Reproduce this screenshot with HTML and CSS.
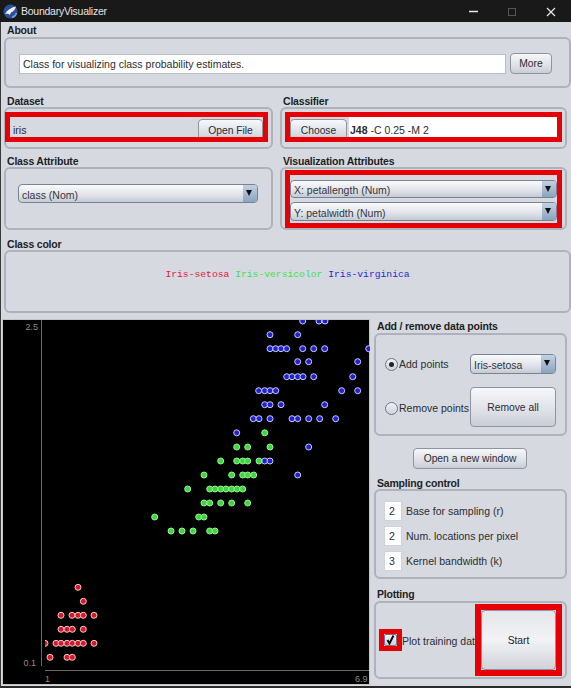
FILE: index.html
```html
<!DOCTYPE html>
<html lang="en">
<head>
    <meta charset="UTF-8">
    <meta name="viewport" content="width=device-width, initial-scale=1.0">
    <title>BoundaryVisualizer</title>
    <link rel="stylesheet" href="styles.css">
</head>
<body>
    <div class="window">
        <div class="titlebar">
            <svg class="app-icon" width="15" height="15" viewBox="0 0 15 15">
                <circle cx="7.500" cy="7.500" r="7" fill="#2b4f96"/>
                <path d="M2 10 C4 6 8 3.500 13 2.500 C12 6 10 8 8.500 8 L6.500 11 C6 9.500 4 9.500 2 10Z" fill="#eef2fa"/>
                <path d="M9 13.500 C11 13 13 11 13.500 9" fill="none" stroke="#7f9ed6" stroke-width="1.500"/>
            </svg>
            <span class="title-text">BoundaryVisualizer</span>
            <div class="win-controls">
                <svg width="102" height="22" viewBox="0 0 102 22">
                    <path d="M0 11.500H9" stroke="#e8e8e8" stroke-width="1.500"/>
                    <rect x="39.500" y="8.500" width="7" height="7" fill="none" stroke="#555"/>
                    <path d="M78 8L86 16M86 8L78 16" stroke="#e8e8e8" stroke-width="1.200"/>
                </svg>
            </div>
        </div>

        <div class="content">
            <div class="group about-group">
                <div class="group-label">About</div>
                <div class="group-box about-box">
                    <div class="text-field about-field">Class for visualizing class probability estimates.</div>
                    <button class="btn more-btn">More</button>
                </div>
            </div>

            <div class="two-col">
                <div class="group">
                    <div class="group-label">Dataset</div>
                    <div class="group-box dataset-box">
                        <div class="red-frame dataset-frame">
                            <span class="dataset-name">iris</span>
                            <button class="btn file-btn">Open File</button>
                        </div>
                    </div>
                </div>
                <div class="group">
                    <div class="group-label">Classifier</div>
                    <div class="group-box dataset-box">
                        <div class="red-frame classifier-frame">
                            <button class="btn choose-btn">Choose</button>
                            <div class="text-field classifier-field"><b>J48</b> -C 0.25 -M 2</div>
                        </div>
                    </div>
                </div>
            </div>

            <div class="two-col attr-row">
                <div class="group">
                    <div class="group-label">Class Attribute</div>
                    <div class="group-box attr-box">
                        <div class="combo class-combo"><span class="combo-text">class (Nom)</span><span class="combo-arrow"></span></div>
                    </div>
                </div>
                <div class="group">
                    <div class="group-label">Visualization Attributes</div>
                    <div class="group-box vis-box">
                        <div class="red-frame vis-frame">
                            <div class="combo"><span class="combo-text">X: petallength (Num)</span><span class="combo-arrow"></span></div>
                            <div class="combo combo-tall"><span class="combo-text">Y: petalwidth (Num)</span><span class="combo-arrow"></span></div>
                        </div>
                    </div>
                </div>
            </div>

            <div class="group color-group">
                <div class="group-label">Class color</div>
                <div class="group-box color-box">
                    <span class="c-red">Iris-setosa</span> <span class="c-green">Iris-versicolor</span> <span class="c-blue">Iris-virginica</span>
                </div>
            </div>
        </div>

        <div class="bottom">
            <svg class="plot" width="368" height="366" viewBox="2 320 368 366">
                <defs>
                    <clipPath id="plot-area"><rect x="45" y="321" width="325" height="349"/></clipPath>
                </defs>
                <rect x="2.500" y="320.500" width="367" height="365" fill="#000" stroke="#c4c4c4"/>
                <path d="M41.500 321V667M45 671.500H369" stroke="#6a6a6a" fill="none"/>
                <text class="axis-text" x="38" y="331" text-anchor="end">2.5</text>
                <text class="axis-text" x="36" y="667" text-anchor="end">0.1</text>
                <text class="axis-text" x="45" y="683">1</text>
                <text class="axis-text" x="355" y="683">6.9</text>
                <g clip-path="url(#plot-area)">
                    <g class="pt-blue">
                        <circle cx="302.700" cy="322" r="3"/><circle cx="319" cy="322" r="3"/><circle cx="325" cy="322" r="3"/>
                        <circle cx="270" cy="335.700" r="3"/><circle cx="297.700" cy="335.700" r="3"/>
                        <circle cx="270" cy="349.700" r="3"/><circle cx="275.700" cy="349.700" r="3"/><circle cx="281" cy="349.700" r="3"/><circle cx="286.700" cy="349.700" r="3"/><circle cx="302.700" cy="349.700" r="3"/><circle cx="313.700" cy="349.700" r="3"/><circle cx="324.700" cy="349.700" r="3"/><circle cx="368.700" cy="349.700" r="3"/>
                        <circle cx="297.700" cy="362.700" r="3"/><circle cx="308.700" cy="362.700" r="3"/><circle cx="357.700" cy="362.700" r="3"/>
                        <circle cx="286.700" cy="377.700" r="3"/><circle cx="292" cy="377.700" r="3"/><circle cx="297.700" cy="377.700" r="3"/><circle cx="303" cy="377.700" r="3"/><circle cx="313.700" cy="377.700" r="3"/><circle cx="352.700" cy="377.700" r="3"/>
                        <circle cx="258.700" cy="391.700" r="3"/><circle cx="264.700" cy="391.700" r="3"/><circle cx="270" cy="391.700" r="3"/><circle cx="275.700" cy="391.700" r="3"/><circle cx="341.700" cy="391.700" r="3"/><circle cx="357.700" cy="391.700" r="3"/>
                        <circle cx="264.700" cy="405.700" r="3"/><circle cx="270" cy="405.700" r="3"/><circle cx="281" cy="405.700" r="3"/><circle cx="324.700" cy="405.700" r="3"/>
                        <circle cx="253.300" cy="419.700" r="3"/><circle cx="259" cy="419.700" r="3"/><circle cx="270" cy="419.700" r="3"/><circle cx="292" cy="419.700" r="3"/><circle cx="297.700" cy="419.700" r="3"/><circle cx="308.700" cy="419.700" r="3"/><circle cx="319.700" cy="419.700" r="3"/><circle cx="335.700" cy="419.700" r="3"/>
                        <circle cx="236.700" cy="433.800" r="3"/>
                        <circle cx="308.700" cy="448" r="3"/>
                        <circle cx="264.700" cy="462" r="3"/><circle cx="270" cy="462" r="3"/>
                        <circle cx="297.700" cy="476" r="3"/>
                    </g>
                    <g class="pt-green">
                        <circle cx="264.700" cy="433.800" r="3"/>
                        <circle cx="236.700" cy="448" r="3"/><circle cx="247.700" cy="448" r="3"/><circle cx="270" cy="448" r="3"/>
                        <circle cx="220.700" cy="462" r="3"/><circle cx="236.700" cy="462" r="3"/><circle cx="242.700" cy="462" r="3"/><circle cx="247.700" cy="462" r="3"/><circle cx="259" cy="462" r="3"/>
                        <circle cx="204" cy="476" r="3"/><circle cx="231.700" cy="476" r="3"/><circle cx="242.700" cy="476" r="3"/><circle cx="247.700" cy="476" r="3"/><circle cx="253.700" cy="476" r="3"/>
                        <circle cx="187.700" cy="490" r="3"/><circle cx="209.700" cy="490" r="3"/><circle cx="215" cy="490" r="3"/><circle cx="220.700" cy="490" r="3"/><circle cx="226" cy="490" r="3"/><circle cx="231.700" cy="490" r="3"/><circle cx="237" cy="490" r="3"/><circle cx="242.700" cy="490" r="3"/>
                        <circle cx="204" cy="504" r="3"/><circle cx="209.700" cy="504" r="3"/><circle cx="220.700" cy="504" r="3"/><circle cx="231.700" cy="504" r="3"/><circle cx="247.700" cy="504" r="3"/>
                        <circle cx="154.700" cy="518" r="3"/><circle cx="198.700" cy="518" r="3"/><circle cx="204" cy="518" r="3"/>
                        <circle cx="171" cy="532" r="3"/><circle cx="182" cy="532" r="3"/><circle cx="193" cy="532" r="3"/><circle cx="209.700" cy="532" r="3"/><circle cx="215" cy="532" r="3"/>
                    </g>
                    <g class="pt-red">
                        <circle cx="78" cy="588.300" r="3"/>
                        <circle cx="83.300" cy="602.300" r="3"/>
                        <circle cx="61" cy="616.300" r="3"/><circle cx="72" cy="616.300" r="3"/><circle cx="78" cy="616.300" r="3"/><circle cx="83.300" cy="616.300" r="3"/><circle cx="94" cy="616.300" r="3"/>
                        <circle cx="61" cy="630.300" r="3"/><circle cx="67" cy="630.300" r="3"/><circle cx="72.300" cy="630.300" r="3"/><circle cx="83.300" cy="630.300" r="3"/>
                        <circle cx="45" cy="644.300" r="3"/><circle cx="56" cy="644.300" r="3"/><circle cx="61" cy="644.300" r="3"/><circle cx="67" cy="644.300" r="3"/><circle cx="72.300" cy="644.300" r="3"/><circle cx="78" cy="644.300" r="3"/><circle cx="83.300" cy="644.300" r="3"/><circle cx="94" cy="644.300" r="3"/>
                        <circle cx="50" cy="658.300" r="3"/><circle cx="67" cy="658.300" r="3"/><circle cx="72.300" cy="658.300" r="3"/>
                    </g>
                </g>
            </svg>

            <div class="side">
                <div class="group">
                    <div class="group-label side-label">Add / remove data points</div>
                    <div class="group-box points-box">
                        <div class="radio-col">
                            <label class="radio-row"><span class="radio radio-on"></span>Add points</label>
                            <label class="radio-row"><span class="radio"></span>Remove points</label>
                        </div>
                        <div class="points-actions">
                            <div class="combo setosa-combo"><span class="combo-text">Iris-setosa</span><span class="combo-arrow"></span></div>
                            <button class="btn remove-btn">Remove all</button>
                        </div>
                    </div>
                </div>

                <div class="new-window-row"><button class="btn new-window-btn">Open a new window</button></div>

                <div class="group">
                    <div class="group-label">Sampling control</div>
                    <div class="group-box sampling-box">
                        <div class="sample-row"><div class="text-field num-field">2</div><span>Base for sampling (r)</span></div>
                        <div class="sample-row"><div class="text-field num-field">2</div><span>Num. locations per pixel</span></div>
                        <div class="sample-row"><div class="text-field num-field">3</div><span>Kernel bandwidth (k)</span></div>
                    </div>
                </div>

                <div class="group">
                    <div class="group-label side-label plotting-label">Plotting</div>
                    <div class="group-box plotting-box">
                        <div class="check-frame">
                            <span class="checkbox">
                                <svg width="11" height="10" viewBox="0 0 11 10"><path d="M2.500 5L4.500 8.500L8.500 0.500" fill="none" stroke="#111" stroke-width="2"/></svg>
                            </span>
                        </div>
                        <span class="check-label">Plot training data</span>
                        <div class="start-frame"><button class="btn start-btn">Start</button></div>
                    </div>
                </div>
            </div>
        </div>
    </div>
</body>
</html>
```

FILE: styles.css
```css
* {
    margin: 0;
    padding: 0;
    box-sizing: border-box;
}

html, body {
    width: 571px;
    height: 688px;
    overflow: hidden;
}

body {
    font-family: "Liberation Sans", Arial, sans-serif;
    font-size: 10.500px;
    color: #2a2d33;
    background-color: #d6d9e0;
}

.window {
    width: 571px;
    height: 688px;
    display: flex;
    flex-direction: column;
    border-left: 1px solid #3a3a3a;
    border-bottom: 2px solid #2a2a2a;
}

.titlebar {
    height: 22px;
    margin-left: -1px;
    padding-left: 3px;
    display: flex;
    align-items: center;
    flex-shrink: 0;
    background-color: #191919;
    color: #e4e4e4;
    font-size: 10.500px;
    letter-spacing: -0.250px;
}

.app-icon {
    margin-right: 3px;
}

.win-controls {
    margin-left: auto;
    width: 102px;
    height: 22px;
}

.content {
    padding-left: 3px;
    flex-shrink: 0;
}

.group-label {
    height: 13px;
    padding-left: 3px;
    font-size: 10.500px;
    font-weight: bold;
    letter-spacing: -0.200px;
    line-height: 14px;
    color: #1d1f24;
}

.group-box {
    border: 2px solid #aeb2bb;
    border-radius: 6px;
    background-color: #d6d9e0;
}

.about-group .group-label {
    height: 15px;
    line-height: 16px;
}

.about-box {
    height: 51px;
    padding: 3px 0 0 13px;
    display: flex;
    align-items: center;
    gap: 4px;
}

.text-field {
    background-color: #fff;
    border: 1px solid #b9bcc4;
    color: #2a2d33;
}

.about-field {
    width: 487px;
    height: 20px;
    padding-left: 3px;
    line-height: 18px;
}

.btn {
    font-family: inherit;
    font-size: 10.300px;
    color: #2a2d33;
    border: 1px solid #8f95a0;
    border-radius: 4px;
    background: linear-gradient(#f7f8fa, #d9dce3 70%, #c8ccd4);
}

.more-btn {
    width: 42px;
    height: 21px;
    margin-top: -1px;
}

.two-col {
    margin-top: 6px;
    display: grid;
    grid-template-columns: 269px 287px;
    gap: 7px;
}

.attr-row {
    margin-top: 5px;
}

.dataset-box {
    height: 42px;
    padding: 3px 3px 0 0;
}

.red-frame {
    border: 5px solid #e60005;
}

.dataset-frame {
    height: 30px;
    margin-left: -1px;
    padding: 2px 0 0 3px;
    display: flex;
    justify-content: space-between;
    overflow: hidden;
}

.dataset-name {
    margin-top: -2px;
    line-height: 26px;
}

.file-btn {
    width: 65px;
    height: 22px;
    flex-shrink: 0;
    border-radius: 4px 4px 0 0;
}

.classifier-frame {
    height: 30px;
    margin-left: 3px;
    display: flex;
    gap: 2px;
    overflow: hidden;
}

.choose-btn {
    width: 57px;
    height: 22px;
    margin-top: 2px;
    flex-shrink: 0;
    border-radius: 4px 4px 0 0;
}

.classifier-field {
    flex: 1;
    height: 20px;
    padding-left: 1px;
    line-height: 26px;
    border: none;
    overflow: hidden;
}

.attr-box {
    height: 63px;
    padding: 15px 0 0 12px;
}

.vis-box {
    height: 63px;
    padding: 1px 3px 0 3px;
}

.vis-frame {
    height: 58px;
    padding-top: 5px;
    display: flex;
    flex-direction: column;
    gap: 4px;
}

.combo {
    height: 18px;
    display: flex;
    align-items: center;
    border: 1px solid #76839a;
    border-radius: 4px;
    overflow: hidden;
    background: linear-gradient(#fafbfc, #dfe2e8 60%, #c5cad3);
}

.combo-tall {
    height: 19px;
}

.class-combo {
    width: 240px;
    height: 19px;
}

.combo-text {
    flex: 1;
    padding: 2px 0 0 3px;
    color: #33363c;
}

.combo-arrow {
    width: 14px;
    height: 100%;
    flex-shrink: 0;
    position: relative;
    background: linear-gradient(#c3d1e2, #8ba3bf);
}

.combo-arrow::after {
    content: "";
    position: absolute;
    left: 3px;
    top: 5px;
    border-left: 3.500px solid transparent;
    border-right: 3.500px solid transparent;
    border-top: 6px solid #111;
}

.color-group {
    margin-top: 7px;
}

.color-box {
    height: 63px;
    padding-top: 16px;
    text-align: center;
    font-family: "Liberation Mono", "Courier New", monospace;
    font-size: 9.700px;
    line-height: 14px;
}

.c-red {
    color: #e0203a;
}

.c-green {
    color: #3fe04a;
}

.c-blue {
    color: #2a2ad0;
}

.bottom {
    margin-top: 6px;
    padding-left: 1px;
    display: flex;
    gap: 4px;
}

.plot {
    display: block;
    flex-shrink: 0;
}

.axis-text {
    font-family: "Liberation Sans", Arial, sans-serif;
    font-size: 9px;
    fill: #8e8e8e;
}

.pt-blue circle {
    fill: #2222cc;
    stroke: #c8ccff;
    stroke-width: 1;
}

.pt-green circle {
    fill: #3bd83b;
    stroke: #9cf09c;
    stroke-width: 1;
}

.pt-red circle {
    fill: #d5192a;
    stroke: #ffc8c8;
    stroke-width: 1;
}

.side {
    width: 193px;
    display: flex;
    flex-direction: column;
}

.side-label {
    height: 14px;
}

.points-box {
    height: 103px;
    padding: 19px 9px 0 9px;
    display: flex;
    justify-content: space-between;
}

.radio-col {
    display: flex;
    flex-direction: column;
    gap: 30px;
    margin-top: 3px;
}

.radio-row {
    display: flex;
    align-items: center;
    height: 14px;
    white-space: nowrap;
}

.radio {
    width: 13px;
    height: 13px;
    margin-right: 1px;
    border: 1px solid #6f7686;
    border-radius: 50%;
    background: linear-gradient(#eef0f4, #cfd3da);
    position: relative;
}

.radio-on::after {
    content: "";
    position: absolute;
    left: 3px;
    top: 3px;
    width: 5px;
    height: 5px;
    border-radius: 50%;
    background-color: #222;
}

.points-actions {
    width: 86px;
    display: flex;
    flex-direction: column;
    gap: 13px;
}

.setosa-combo {
    height: 20px;
}

.remove-btn {
    width: 86px;
    height: 40px;
}

.new-window-row {
    height: 40px;
    padding: 12px 1px 0 0;
    display: flex;
    justify-content: center;
}

.new-window-btn {
    width: 114px;
    height: 21px;
}

.sampling-box {
    height: 90px;
    padding: 10px 0 0 8px;
    display: flex;
    flex-direction: column;
    gap: 5px;
}

.sample-row {
    display: flex;
    align-items: center;
    gap: 4px;
}

.num-field {
    width: 18px;
    height: 20px;
    padding-left: 4px;
    line-height: 18px;
    flex-shrink: 0;
    border: 1px solid #cfd2d9;
}

.plotting-label {
    margin-top: 8px;
}

.plotting-box {
    height: 78px;
    padding: 1px 0 0 3px;
    display: flex;
    align-items: flex-start;
}

.check-frame {
    width: 23px;
    height: 22px;
    margin-top: 25px;
    flex-shrink: 0;
    border: 5px solid #e60005;
}

.checkbox {
    display: block;
    width: 13px;
    height: 12px;
    border: 1px solid #6f7686;
    border-radius: 2px;
    background: linear-gradient(#f2f3f6, #cfd3da);
}

.checkbox svg {
    display: block;
}

.check-label {
    width: 73px;
    margin-top: 31px;
    overflow: hidden;
    white-space: nowrap;
    flex-shrink: 0;
}

.start-frame {
    width: 87px;
    height: 72px;
    border: 6px solid #e60005;
    flex-shrink: 0;
}

.start-btn {
    display: block;
    width: 75px;
    height: 60px;
    color: #1d1f24;
    background: linear-gradient(#e4e6eb, #f2f3f6 50%, #cfd2d9);
}
```
